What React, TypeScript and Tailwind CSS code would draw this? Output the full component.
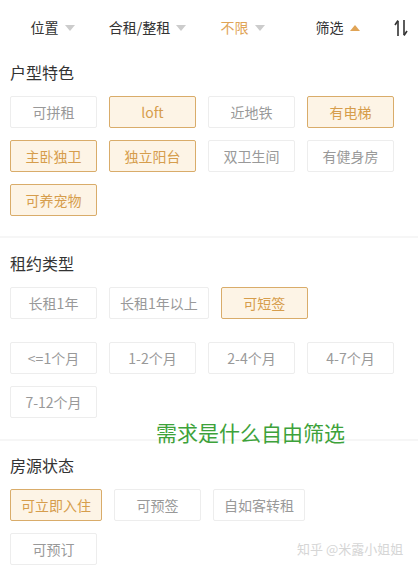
import React from "react";

const font = { fontFamily: '"Noto Sans CJK SC", "Noto Sans", sans-serif' };

function Tri({ up, color }: { up?: boolean; color: string }) {
  return (
    <svg width="10" height="6" viewBox="0 0 10 6" className="ml-[6px]">
      {up ? <path d="M0 6 L5 0 L10 6 Z" fill={color} /> : <path d="M0 0 L10 0 L5 6 Z" fill={color} />}
    </svg>
  );
}

function Chip({ label, on }: { label: string; on?: boolean }) {
  return (
    <div
      className={
        "h-[32px] min-w-[87px] px-[10px] flex items-center justify-center rounded-[2px] text-[14px] border " +
        (on ? "bg-[#fdf4e6] border-[#d9ac6a] text-[#d69d4c]" : "bg-white border-[#ededed] text-[#999999]")
      }
    >
      {label}
    </div>
  );
}

function Section({ title, rows, pt, pb, divider }: { title: string; rows: { items: [string, boolean?][]; mt?: string }[]; pt: string; pb: string; divider?: boolean }) {
  return (
    <div className={pt + " " + pb + " px-[10px] " + (divider ? "border-b-2 border-[#f6f6f6]" : "")}>
      <div className="h-[24px] leading-[24px] text-[16px] text-[#333333]">{title}</div>
      {rows.map((r, i) => (
        <div key={i} className={"flex flex-wrap gap-[12px] " + (r.mt ?? "mt-[12px]")}>
          {r.items.map(([l, on]) => (
            <Chip key={l} label={l} on={on} />
          ))}
        </div>
      ))}
    </div>
  );
}

export default function App() {
  return (
    <div className="relative w-[418px] h-[568px] overflow-hidden bg-white" style={font}>
      <div className="h-[55px] flex items-center pl-[5px] text-[14px] text-[#333333]">
        <div className="w-[95px] flex items-center justify-center">位置<Tri color="#cccccc" /></div>
        <div className="w-[95px] flex items-center justify-center">合租/整租<Tri color="#cccccc" /></div>
        <div className="w-[95px] flex items-center justify-center text-[#dfa456]">不限<Tri color="#cccccc" /></div>
        <div className="w-[95px] flex items-center justify-center">筛选<Tri up color="#e0a456" /></div>
        <svg width="14" height="18" viewBox="0 0 14 18" className="ml-[9px]">
          <path d="M4 2 L4 17" stroke="#333" strokeWidth="1.6" />
          <path d="M4 1.5 L1 6" stroke="#333" strokeWidth="1.6" />
          <path d="M10 1 L10 16" stroke="#333" strokeWidth="1.6" />
          <path d="M10 16.5 L13 12" stroke="#333" strokeWidth="1.6" />
        </svg>
      </div>

      <Section
        title="户型特色"
        pt="pt-[5px]"
        pb="pb-[20px]"
        divider
        rows={[
          { items: [["可拼租"], ["loft", true], ["近地铁"], ["有电梯", true]] },
          { items: [["主卧独卫", true], ["独立阳台", true], ["双卫生间"], ["有健身房"]] },
          { items: [["可养宠物", true]] },
        ]}
      />
      <Section
        title="租约类型"
        pt="pt-[13px]"
        pb="pb-[21px]"
        divider
        rows={[
          { items: [["长租1年"], ["长租1年以上"], ["可短签", true]] },
          { items: [["<=1个月"], ["1-2个月"], ["2-4个月"], ["4-7个月"]], mt: "mt-[23px]" },
          { items: [["7-12个月"]] },
        ]}
      />
      <Section
        title="房源状态"
        pt="pt-[12px]"
        pb="pb-[0px]"
        rows={[
          { items: [["可立即入住", true], ["可预签"], ["自如客转租"]] },
          { items: [["可预订"]] },
        ]}
      />

      <div className="absolute left-[156px] top-[417px] text-[21px] leading-[30px] text-[#3da23a] whitespace-nowrap">需求是什么自由筛选</div>
      <div className="absolute left-[297px] top-[540px] text-[13px] leading-[18px] text-[#d6d6d6] whitespace-nowrap">知乎 @米露小姐姐</div>
    </div>
  );
}
